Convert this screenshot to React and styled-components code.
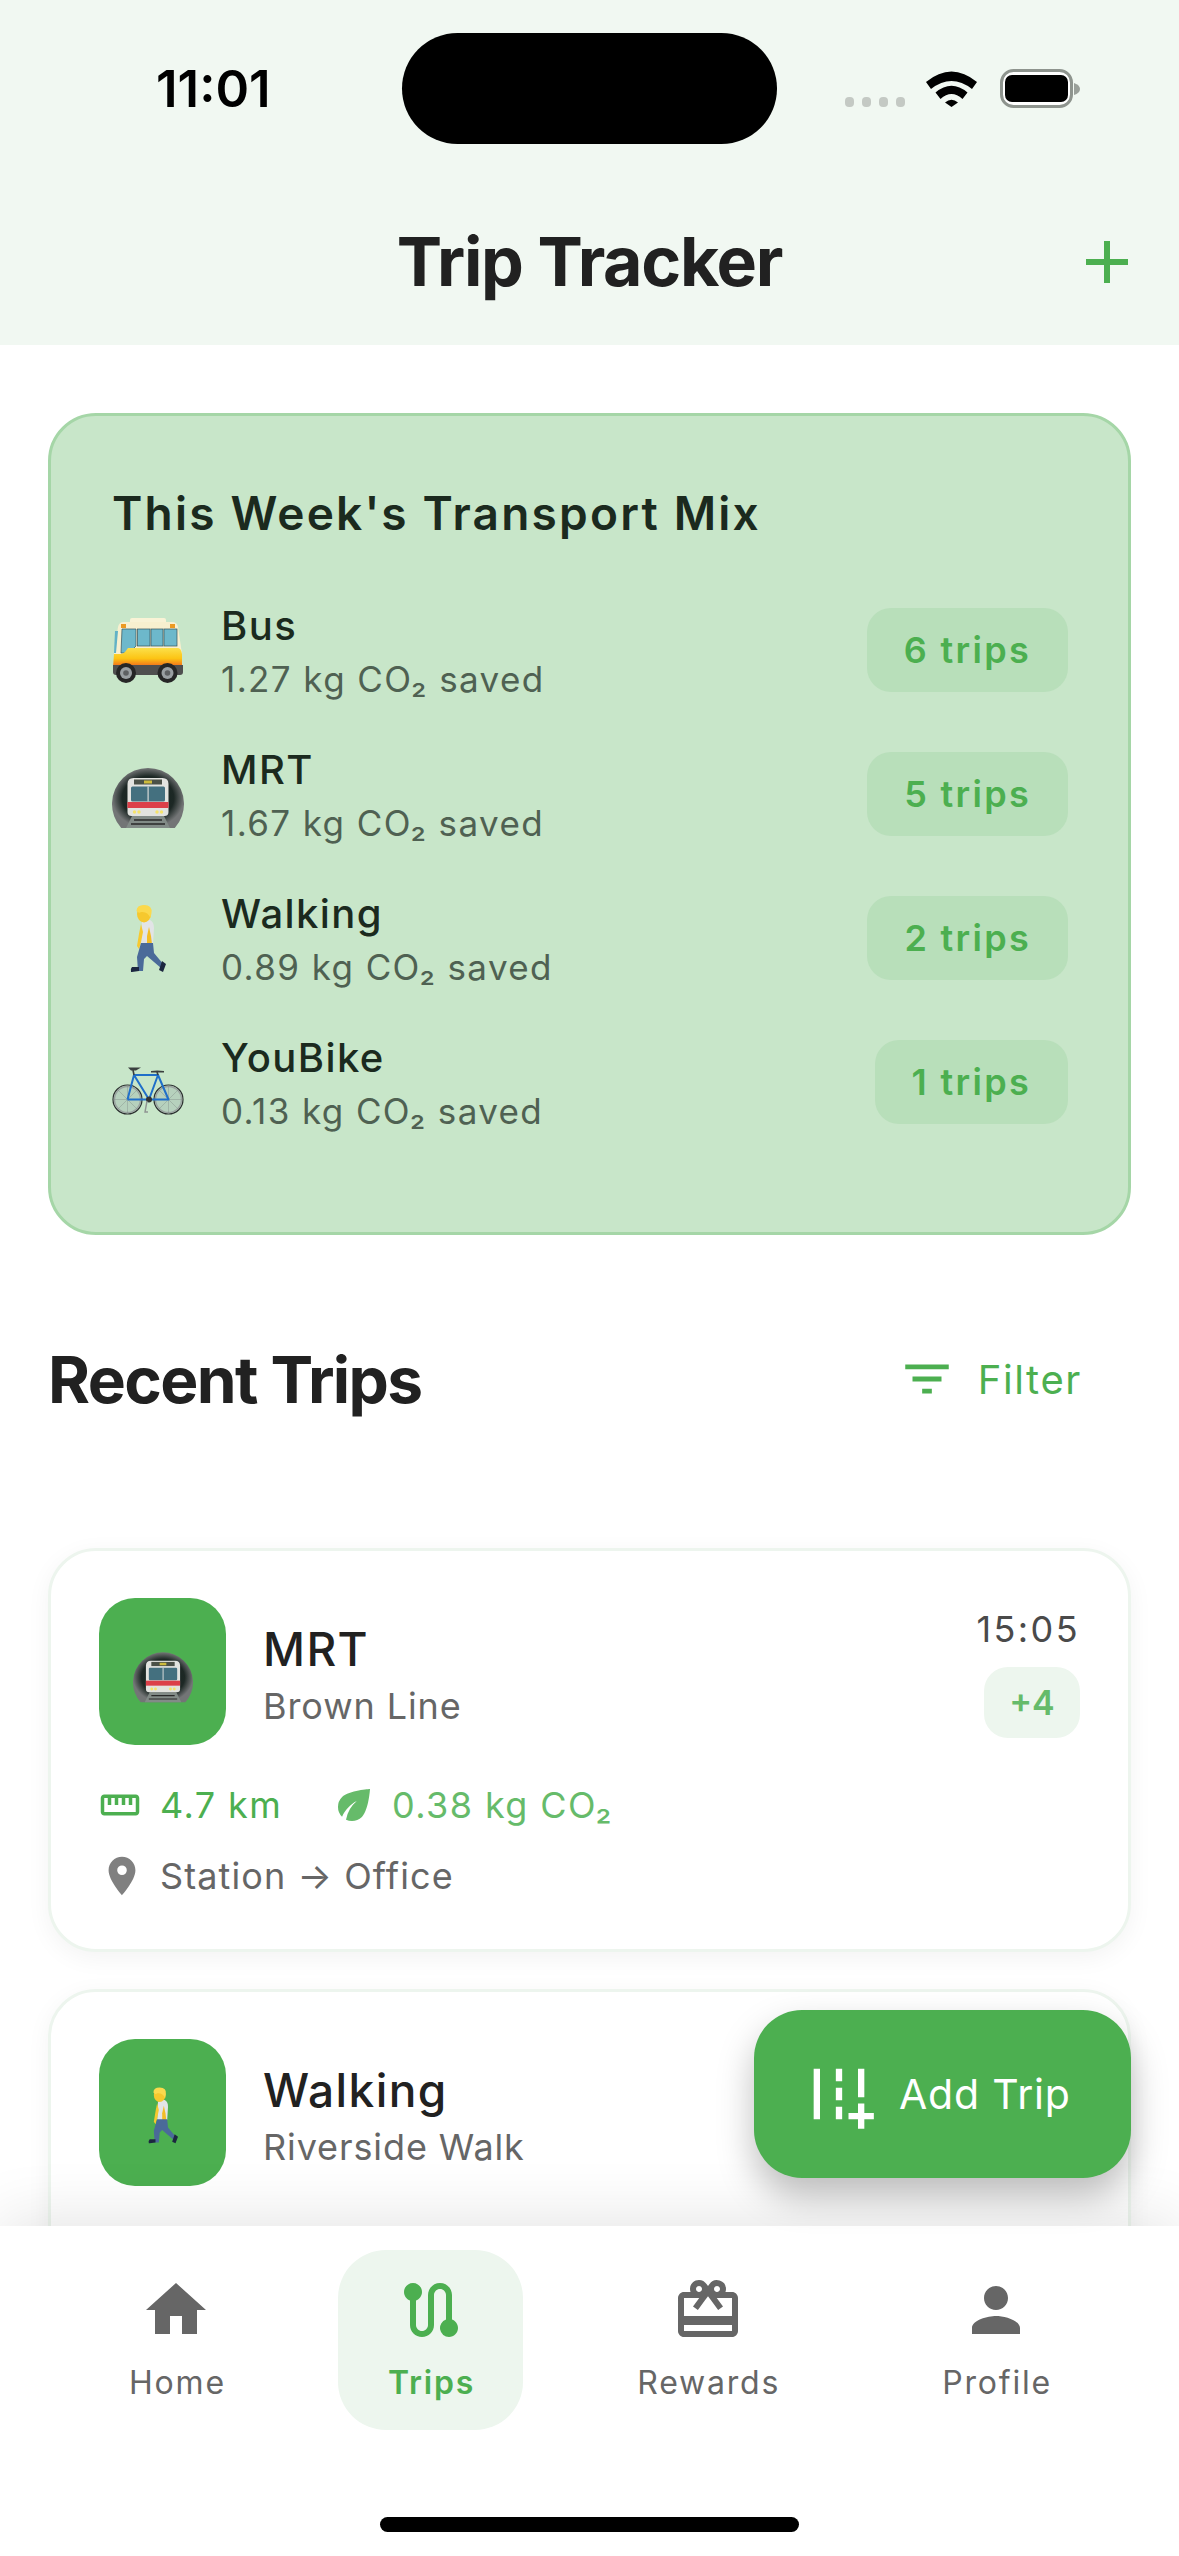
import React from "react";
import styled, { createGlobalStyle } from "styled-components";
import {
  MdAdd,
  MdAddRoad,
  MdCardGiftcard,
  MdEco,
  MdFilterList,
  MdHome,
  MdLocationOn,
  MdPerson,
  MdRoute,
  MdStraighten,
} from "react-icons/md";

const GlobalStyle = createGlobalStyle`
  html, body {
    margin: 0;
    padding: 0;
    background: #fff;
  }
  * {
    box-sizing: border-box;
  }
`;

const Page = styled.div`
  position: relative;
  width: 1179px;
  height: 2556px;
  display: flex;
  flex-direction: column;
  overflow: hidden;
  background: #fff;
  font-family: Inter, "Noto Sans", sans-serif;
  color: #212121;
`;

const Header = styled.header`
  flex: none;
  height: 345px;
  padding-top: 33px;
  background: #f1f8f2;
`;

const StatusBar = styled.div`
  height: 111px;
  padding-left: 156px;
  display: flex;
  align-items: center;
`;

const Clock = styled.div`
  width: 114px;
  margin-right: 132px;
  font-size: 51px;
  font-weight: 600;
  color: #000;
  white-space: nowrap;
`;

const Island = styled.div`
  width: 375px;
  height: 111px;
  margin-right: 68px;
  border-radius: 56px;
  background: #000;
`;

const TitleRow = styled.div`
  height: 72px;
  margin-top: 80px;
  padding: 0 36px;
  display: grid;
  grid-template-columns: 1fr auto 1fr;
  align-items: center;
`;

const Title = styled.h1`
  grid-column: 2;
  margin: 0;
  font-size: 68px;
  line-height: 72px;
  font-weight: 700;
  letter-spacing: -1.3px;
  color: #212121;
`;

const PlusButton = styled.div`
  justify-self: end;
  display: flex;
  margin-top: 2px;
  color: #4caf50;
`;

const Content = styled.main`
  flex: 1;
  min-height: 0;
  padding: 68px 48px 0;
  overflow: hidden;
`;

const MixCard = styled.section`
  padding: 67px 60px 108px 61px;
  border: 3px solid #a5d6a7;
  border-radius: 48px;
  background: #c8e6c9;
`;

const MixTitle = styled.h2`
  margin: 0 0 65px;
  font-size: 46px;
  line-height: 60px;
  font-weight: 600;
  letter-spacing: 2.2px;
  color: #1b2a1e;
`;

const MixList = styled.div`
  display: flex;
  flex-direction: column;
  gap: 60px;
`;

const MixRow = styled.div`
  height: 84px;
  display: flex;
  align-items: center;
`;

const MixEmoji = styled.div`
  width: 72px;
  height: 72px;
  margin-right: 37px;
  flex: none;
`;

const MixText = styled.div`
  flex: 1;
  padding-top: 3px;
  display: flex;
  flex-direction: column;
  gap: 7px;
`;

const MixName = styled.div`
  font-size: 40px;
  line-height: 48px;
  font-weight: 500;
  letter-spacing: 1.4px;
  color: #1b2a1e;
`;

const MixSaved = styled.div`
  font-size: 35px;
  line-height: 44px;
  letter-spacing: 1.4px;
  color: #4f6152;
`;

const TripChip = styled.div`
  height: 84px;
  padding: 0 37px;
  display: flex;
  align-items: center;
  border-radius: 24px;
  background: rgba(76, 175, 80, 0.12);
  font-size: 36px;
  font-weight: 600;
  letter-spacing: 2.3px;
  color: #4caf50;
`;

const SectionHeader = styled.div`
  height: 80px;
  margin: 104px 0 129px;
  padding-right: 49px;
  display: flex;
  align-items: center;
  justify-content: space-between;
`;

const SectionTitle = styled.h2`
  margin: 0;
  font-size: 64px;
  font-weight: 700;
  letter-spacing: -1.6px;
  color: #212121;
`;

const FilterButton = styled.div`
  display: flex;
  align-items: center;
  gap: 22px;
  font-size: 40px;
  font-weight: 400;
  letter-spacing: 1.6px;
  color: #4caf50;
`;

const TripList = styled.div`
  display: flex;
  flex-direction: column;
  gap: 37px;
`;

const TripCard = styled.article`
  min-height: 404px;
  padding: 47px 48px 49px;
  border: 3px solid #edf5ee;
  border-radius: 48px;
  background: #fff;
  box-shadow: 0 6px 24px rgba(0, 0, 0, 0.05);
`;

const TripTop = styled.div`
  display: flex;
  align-items: center;
`;

const TripTile = styled.div`
  width: 127px;
  height: 147px;
  margin-right: 37px;
  padding-top: 5px;
  flex: none;
  display: flex;
  align-items: center;
  justify-content: center;
  border-radius: 36px;
  background: #4caf50;
`;

const TileEmoji = styled.div`
  width: 60px;
  height: 60px;
`;

const TripText = styled.div`
  flex: 1;
  padding-top: 5px;
  display: flex;
  flex-direction: column;
  gap: 7px;
`;

const TripName = styled.div`
  font-size: 46px;
  line-height: 56px;
  font-weight: 500;
  letter-spacing: 1.4px;
  color: #212121;
`;

const TripLine = styled.div`
  font-size: 36px;
  line-height: 44px;
  letter-spacing: 0.9px;
  color: #666;
`;

const TripSide = styled.div`
  display: flex;
  flex-direction: column;
  align-items: flex-end;
  gap: 14px;
`;

const TripTime = styled.div`
  font-size: 36px;
  line-height: 48px;
  letter-spacing: 2.4px;
  color: #4a4a4a;
`;

const PointsBadge = styled.div`
  width: 96px;
  height: 71px;
  display: flex;
  align-items: center;
  justify-content: center;
  border-radius: 24px;
  background: #edf6ee;
  font-size: 34px;
  font-weight: 600;
  color: #66bb6a;
`;

const StatRow = styled.div`
  height: 48px;
  margin-top: 36px;
  display: flex;
  align-items: center;
`;

const Stat = styled.div`
  display: flex;
  align-items: center;
  gap: ${(props) => props.$gap}px;
  margin-right: 48px;
  font-size: 36px;
  letter-spacing: 1.4px;
  color: ${(props) => props.$color};
`;

const RouteRow = styled.div`
  height: 48px;
  margin-top: 23px;
  display: flex;
  align-items: center;
  gap: 15px;
  font-size: 36px;
  letter-spacing: 1.1px;
  color: #666;
  svg {
    color: #808080;
  }
`;

const Fab = styled.div`
  position: absolute;
  right: 48px;
  bottom: 378px;
  width: 377px;
  height: 168px;
  z-index: 3;
  padding-left: 47px;
  display: flex;
  align-items: center;
  gap: 22px;
  border-radius: 48px;
  background: #4caf50;
  box-shadow: 0 18px 36px rgba(0, 0, 0, 0.26);
  font-size: 41px;
  font-weight: 400;
  letter-spacing: 0.8px;
  color: #fff;
`;

const Nav = styled.nav`
  position: relative;
  z-index: 2;
  flex: none;
  height: 330px;
  padding-top: 24px;
  display: flex;
  flex-direction: column;
  align-items: center;
  background: #fff;
  box-shadow: 0 -6px 60px rgba(0, 0, 0, 0.11);
`;

const NavItems = styled.div`
  width: 100%;
  padding: 0 15px;
  display: flex;
  justify-content: space-evenly;
`;

const NavItem = styled.div`
  height: 180px;
  padding: 24px 48px 0;
  display: flex;
  flex-direction: column;
  align-items: center;
  gap: 17px;
  border-radius: 48px;
  background: ${(props) => (props.$active ? "#edf6ee" : "transparent")};
  color: ${(props) => (props.$active ? "#4caf50" : "#666")};
`;

const NavLabel = styled.div`
  font-size: 32px;
  line-height: 40px;
  font-weight: ${(props) => (props.$active ? 600 : 400)};
  letter-spacing: 1.8px;
  text-indent: 2px;
`;

const HomeBar = styled.div`
  width: 419px;
  height: 15px;
  margin-top: 87px;
  border-radius: 8px;
  background: #000;
`;

const StatusIcons = () => (
  <svg width="236" height="40" viewBox="0 0 236 40">
    <g fill="#c4c9c4">
      <rect x="0" y="28" width="9" height="10" rx="4" />
      <rect x="17" y="28" width="9" height="10" rx="4" />
      <rect x="34" y="28" width="9" height="10" rx="4" />
      <rect x="51" y="28" width="9" height="10" rx="4" />
    </g>
    <path d="M81 13Q106.500 -8 132 13L127 20Q106.500 4 86 20Z" fill="#000" />
    <path d="M90.500 23.500Q106.500 10 122.500 23.500L117.500 30Q106.500 20 95.500 30Z" fill="#000" />
    <path d="M100 33.500Q106.500 28 113 33.500L106.500 38Z" fill="#000" />
    <rect x="156.500" y="1.500" width="70" height="36" rx="12" fill="#fff" stroke="#8e948e" strokeWidth="3" />
    <rect x="160" y="6" width="63" height="27" rx="7" fill="#000" />
    <path d="M229 14q6 2 6 6t-6 6z" fill="#9aa09a" />
  </svg>
);

const BusEmoji = () => (
  <svg width="100%" height="100%" viewBox="0 0 72 72">
    <defs>
      <linearGradient id="busBand" x1="0" y1="0" x2="0" y2="1">
        <stop offset="0" stopColor="#fbe04a" />
        <stop offset="0.55" stopColor="#fcc414" />
        <stop offset="1" stopColor="#f0651d" />
      </linearGradient>
    </defs>
    <rect x="18" y="4" width="36" height="6" rx="2" fill="#f9f3d6" />
    <path d="M6 13q1-5 6-5h48q5 0 6 5l4 27H2z" fill="#f8f0cf" />
    <rect x="9" y="10" width="5" height="4" fill="#eb9a22" />
    <rect x="58" y="10" width="5" height="4" fill="#eb9a22" />
    <path d="M3 17h3l-2 22H2z" fill="#62b2c6" />
    <path d="M10 15h14v17l-7 7H9z" fill="#6db8cb" stroke="#35525b" strokeWidth="0.700" />
    <rect x="25.500" y="15" width="12.500" height="17" fill="#6db8cb" stroke="#35525b" strokeWidth="0.700" />
    <rect x="39" y="15" width="12" height="17" fill="#6db8cb" stroke="#35525b" strokeWidth="0.700" />
    <rect x="52" y="15" width="13" height="17" fill="#6db8cb" stroke="#35525b" strokeWidth="0.700" />
    <path d="M2 40h6q3 0 5-2l3-4h50q3 0 4 6v13H1z" fill="url(#busBand)" />
    <path d="M1 51h70v7q0 3-3 3H4q-3 0-3-3z" fill="#4f4f4f" />
    <circle cx="14" cy="59" r="10" fill="#262626" />
    <circle cx="14" cy="59" r="6" fill="#9a9fa2" />
    <circle cx="14" cy="59" r="2.800" fill="#5e6062" />
    <circle cx="55.500" cy="59" r="10" fill="#262626" />
    <circle cx="55.500" cy="59" r="6" fill="#9a9fa2" />
    <circle cx="55.500" cy="59" r="2.800" fill="#5e6062" />
  </svg>
);

const MetroEmoji = () => (
  <svg width="100%" height="100%" viewBox="0 0 72 72">
    <defs>
      <radialGradient id="tunnel" cx="0.5" cy="0.5" r="0.5">
        <stop offset="0" stopColor="#10201b" />
        <stop offset="0.72" stopColor="#1d2825" />
        <stop offset="1" stopColor="#737576" />
      </radialGradient>
    </defs>
    <path d="M9.200 70A36 36 0 1 1 62.800 70Z" fill="url(#tunnel)" />
    <path d="M20 58h32l6 12H14z" fill="#828b87" />
    <path d="M22 62h28M19 66h34" stroke="#2a2a2a" strokeWidth="1.400" />
    <path d="M15.500 26q0-6 6-6h29q6 0 6 6v28q0 4-4 4H19.500q-4 0-4-4z" fill="#e2e3df" />
    <rect x="22" y="21.500" width="28" height="5" fill="#4b5147" />
    <rect x="32" y="22.500" width="8" height="3" fill="#cdbb3c" />
    <rect x="19" y="28.500" width="34" height="15" rx="1.500" fill="#44707f" />
    <rect x="35.500" y="28.500" width="1.200" height="15" fill="#d6dad8" />
    <rect x="15.500" y="44" width="41" height="6" fill="#dc3f49" />
    <circle cx="22.500" cy="54" r="1.700" fill="#f6e36b" />
    <circle cx="27" cy="54" r="1.700" fill="#f6e36b" />
    <circle cx="45" cy="54" r="1.700" fill="#f6e36b" />
    <circle cx="49.500" cy="54" r="1.700" fill="#f6e36b" />
  </svg>
);

const WalkEmoji = () => (
  <svg width="100%" height="100%" viewBox="0 0 72 72">
    <path d="M30 20q4-3 8-2 4 2 4 8l-1 16H29z" fill="#e2e4e6" />
    <path d="M29 22q-2 9-3 16l-1 6 2 3 2-7 2-10z" fill="#f7c92f" />
    <path d="M37 25l2 9 1 8-2 3-3-3 0-8z" fill="#f2bd26" />
    <path d="M29 41h12l1 10 10 12-3 3-14-12-3 3-1 12h-5l-1-14z" fill="#4a6a99" />
    <path d="M20 65l7 0 0 4-7 1h-1q-1-3 1-5zM50 59l4 3-3 8-4-2z" fill="#1c2740" />
    <ellipse cx="32" cy="12" rx="7" ry="8.500" fill="#f6c82e" />
    <path d="M24.500 9q0-6 7.500-6 8.500 0 7.500 8l-1 5q-3-7-9.500-6-2 2-4.500-1z" fill="#fbd94d" />
  </svg>
);

const BikeEmoji = () => (
  <svg width="100%" height="100%" viewBox="0 0 72 72">
    <g fill="rgba(150, 170, 165, 0.35)" stroke="#2b2f2f" strokeWidth="1.200">
      <circle cx="15.500" cy="53.500" r="14.500" />
      <circle cx="56.500" cy="53.500" r="14.500" />
    </g>
    <g fill="none" stroke="#9aa3a0" strokeWidth="1.400">
      <circle cx="15.500" cy="53.500" r="13" />
      <circle cx="56.500" cy="53.500" r="13" />
    </g>
    <g stroke="#7e8a86" strokeWidth="0.400">
      <path d="M15.500 40v27M2 53.500h27M6 44l19 19M25 44L6 63" />
      <path d="M56.500 40v27M43 53.500h27M47 44l19 19M66 44L47 63" />
    </g>
    <path d="M15.500 53.500L22 29l15 24.500H15.500M22 29h24L37 53.500h19.500L46 29" fill="none" stroke="#1f6fc9" strokeWidth="2" strokeLinejoin="round" />
    <path d="M22 29l-1-5M46 29l-1-3" stroke="#3a3f3f" strokeWidth="1.600" />
    <path d="M16 21.500h13l-5 3h-5z" fill="#3a3f3f" />
    <path d="M39 25q6-1 13 0v1.600H39z" fill="#3a3f3f" />
    <circle cx="37" cy="53.500" r="3" fill="#333" />
    <path d="M35 55l-2 11h3" stroke="#8f9492" strokeWidth="1.400" fill="none" />
  </svg>
);

const emojiFor = {
  Bus: BusEmoji,
  MRT: MetroEmoji,
  Walking: WalkEmoji,
  YouBike: BikeEmoji,
};

const mix = [
  { name: "Bus", saved: "1.27", trips: 6 },
  { name: "MRT", saved: "1.67", trips: 5 },
  { name: "Walking", saved: "0.89", trips: 2 },
  { name: "YouBike", saved: "0.13", trips: 1 },
];

const navItems = [
  { label: "Home", Icon: MdHome },
  { label: "Trips", Icon: MdRoute, active: true },
  { label: "Rewards", Icon: MdCardGiftcard },
  { label: "Profile", Icon: MdPerson },
];

export default function App() {
  const MetroIcon = emojiFor.MRT;
  const WalkIcon = emojiFor.Walking;

  return (
    <Page>
      <GlobalStyle />
      <Header>
        <StatusBar>
          <Clock>11:01</Clock>
          <Island />
          <StatusIcons />
        </StatusBar>
        <TitleRow>
          <Title>Trip Tracker</Title>
          <PlusButton>
            <MdAdd size={72} />
          </PlusButton>
        </TitleRow>
      </Header>

      <Content>
        <MixCard>
          <MixTitle>This Week's Transport Mix</MixTitle>
          <MixList>
            {mix.map((item) => {
              const Emoji = emojiFor[item.name];
              return (
                <MixRow key={item.name}>
                  <MixEmoji>
                    <Emoji />
                  </MixEmoji>
                  <MixText>
                    <MixName>{item.name}</MixName>
                    <MixSaved>{item.saved} kg CO₂ saved</MixSaved>
                  </MixText>
                  <TripChip>{item.trips} trips</TripChip>
                </MixRow>
              );
            })}
          </MixList>
        </MixCard>

        <SectionHeader>
          <SectionTitle>Recent Trips</SectionTitle>
          <FilterButton>
            <MdFilterList size={58} />
            Filter
          </FilterButton>
        </SectionHeader>

        <TripList>
          <TripCard>
            <TripTop>
              <TripTile>
                <TileEmoji>
                  <MetroIcon />
                </TileEmoji>
              </TripTile>
              <TripText>
                <TripName>MRT</TripName>
                <TripLine>Brown Line</TripLine>
              </TripText>
              <TripSide>
                <TripTime>15:05</TripTime>
                <PointsBadge>+4</PointsBadge>
              </TripSide>
            </TripTop>
            <StatRow>
              <Stat $gap={19} $color="#4caf50">
                <MdStraighten size={42} />
                4.7 km
              </Stat>
              <Stat $gap={14} $color="#66bb6a">
                <MdEco size={48} />
                0.38 kg CO₂
              </Stat>
            </StatRow>
            <RouteRow>
              <MdLocationOn size={46} />
              Station → Office
            </RouteRow>
          </TripCard>

          <TripCard>
            <TripTop>
              <TripTile>
                <TileEmoji>
                  <WalkIcon />
                </TileEmoji>
              </TripTile>
              <TripText>
                <TripName>Walking</TripName>
                <TripLine>Riverside Walk</TripLine>
              </TripText>
            </TripTop>
          </TripCard>
        </TripList>
      </Content>

      <Fab>
        <MdAddRoad size={76} />
        Add Trip
      </Fab>

      <Nav>
        <NavItems>
          {navItems.map(({ label, Icon, active }) => (
            <NavItem key={label} $active={active}>
              <Icon size={72} />
              <NavLabel $active={active}>{label}</NavLabel>
            </NavItem>
          ))}
        </NavItems>
        <HomeBar />
      </Nav>
    </Page>
  );
}
